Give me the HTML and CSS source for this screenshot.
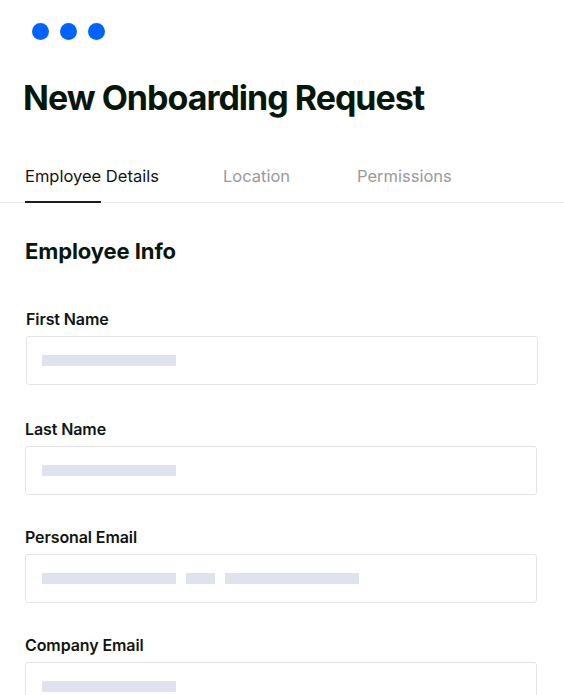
FILE: index.html
```html
<!DOCTYPE html>
<html lang="en">
<head>
<meta charset="utf-8">
<title>New Onboarding Request</title>
<link rel="stylesheet" href="styles.css">
</head>
<body>
<div class="page">
  <div class="dots">
    <span class="dot"></span><span class="dot"></span><span class="dot"></span>
  </div>
  <h1 class="title">New Onboarding Request</h1>
  <nav class="tabs">
    <div class="tab active">Employee Details</div>
    <div class="tab">Location</div>
    <div class="tab">Permissions</div>
  </nav>
  <h2 class="section">Employee Info</h2>
  <div class="form">
    <div class="field first">
      <div class="label">First Name</div>
      <div class="input"><span class="bar"></span></div>
    </div>
    <div class="field">
      <div class="label">Last Name</div>
      <div class="input"><span class="bar"></span></div>
    </div>
    <div class="field">
      <div class="label">Personal Email</div>
      <div class="input"><span class="bar"></span><span class="bar short"></span><span class="bar"></span></div>
    </div>
    <div class="field">
      <div class="label">Company Email</div>
      <div class="input"><span class="bar"></span></div>
    </div>
  </div>
</div>
</body>
</html>
```

FILE: styles.css
```css
html, body {
  margin: 0;
  padding: 0;
  background: #ffffff;
}
body {
  font-family: Inter, "Noto Sans", sans-serif;
  color: #0b1910;
  overflow: hidden;
}
.page {
  width: 564px;
  height: 695px;
  overflow: hidden;
}
.dots {
  display: flex;
  gap: 11px;
  padding: 23px 0 0 32px;
  height: 17px;
}
.dot {
  width: 17px;
  height: 17px;
  border-radius: 50%;
  background: #0062ff;
}
.title {
  margin: 38px 0 0 0;
  padding-left: 23px;
  font-size: 34px;
  line-height: 40px;
  font-weight: 700;
  letter-spacing: -1px;
  color: #07170c;
}
.tabs {
  display: grid;
  grid-template-columns: 198px 134px auto;
  margin-top: 48px;
  padding-left: 25px;
  border-bottom: 1px solid #e6ebeb;
}
.tab {
  font-size: 16.5px;
  line-height: 20px;
  color: #9a9a9a;
  margin-bottom: -1px;
  letter-spacing: 0;
}
.tab::after {
  content: "";
  display: block;
  width: 76px;
  height: 2px;
  margin-top: 15px;
  background: transparent;
}
.tab.active {
  color: #141414;
}
.tab.active::after {
  background: #1d1d1d;
}
.section {
  margin: 35px 0 0 0;
  padding-left: 25px;
  font-size: 22px;
  line-height: 26px;
  font-weight: 700;
  letter-spacing: -0.1px;
  color: #07170c;
}
.form {
  display: flex;
  flex-direction: column;
  gap: 32px;
  margin-top: 45px;
  padding: 0 27px 0 25px;
}
.field.first {
  padding-left: 1px;
  margin-right: -1px;
  margin-bottom: 2px;
}
.label {
  font-size: 16px;
  line-height: 20px;
  font-weight: 600;
  color: #111511;
  letter-spacing: -0.1px;
  margin-bottom: 7px;
}
.input {
  box-sizing: border-box;
  height: 49px;
  border: 1px solid #e4e4e4;
  border-radius: 3px;
  display: flex;
  align-items: flex-start;
  gap: 10px;
  padding: 18px 0 0 16px;
}
.field.first .input {
  padding-left: 15px;
}
.bar {
  width: 134px;
  height: 11px;
  background: #dfe3ee;
}
.bar.short {
  width: 29px;
}
```
